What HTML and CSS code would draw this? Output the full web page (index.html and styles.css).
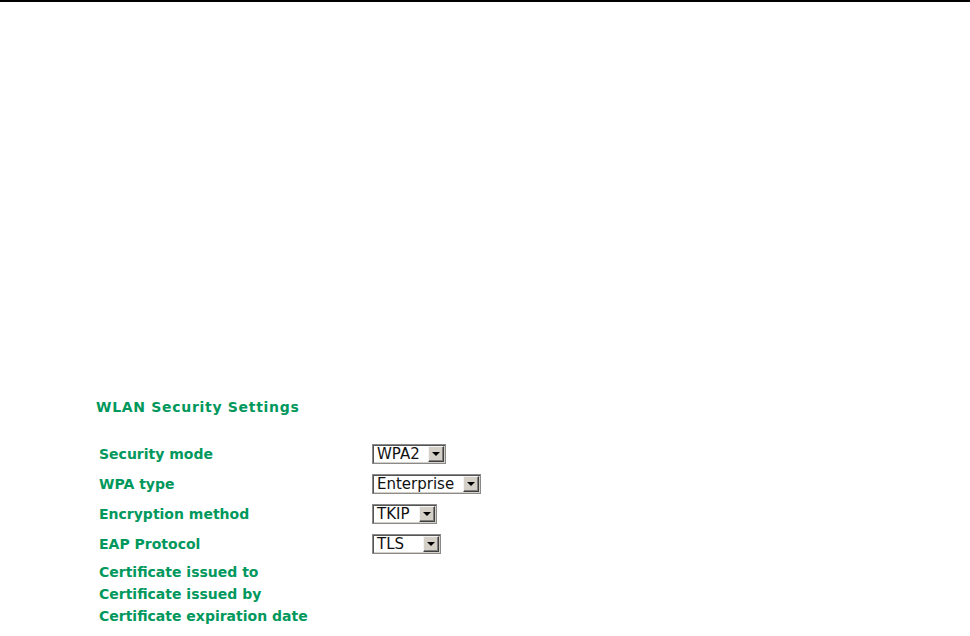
FILE: index.html
```html
<!DOCTYPE html>
<html lang="en">

<head>
    <meta charset="UTF-8">
    <meta name="viewport" content="width=device-width, initial-scale=1.0">
    <title>WLAN Security Settings</title>

    <link rel="stylesheet" href="styles.css">
</head>

<body>
    <div class="page">
        <div class="settings">
            <h2 class="settings_title">WLAN Security Settings</h2>

            <div class="settings_form">
                <div class="row">
                    <div class="label">Security mode</div>
                    <div class="field">
                        <span class="combo combo_wpa2"><span class="combo_text">WPA2</span><span class="combo_btn"></span></span>
                    </div>
                </div>
                <div class="row">
                    <div class="label">WPA type</div>
                    <div class="field">
                        <span class="combo combo_type"><span class="combo_text">Enterprise</span><span class="combo_btn"></span></span>
                    </div>
                </div>
                <div class="row">
                    <div class="label">Encryption method</div>
                    <div class="field">
                        <span class="combo combo_enc"><span class="combo_text">TKIP</span><span class="combo_btn"></span></span>
                    </div>
                </div>
                <div class="row">
                    <div class="label">EAP Protocol</div>
                    <div class="field">
                        <span class="combo combo_eap"><span class="combo_text">TLS</span><span class="combo_btn"></span></span>
                    </div>
                </div>

                <div class="row row_small row_first">
                    <div class="label">Certificate issued to</div>
                    <div class="field"></div>
                </div>
                <div class="row row_small">
                    <div class="label">Certificate issued by</div>
                    <div class="field"></div>
                </div>
                <div class="row row_small">
                    <div class="label">Certificate expiration date</div>
                    <div class="field"></div>
                </div>
            </div>
        </div>
    </div>
</body>

</html>
```

FILE: styles.css
```css
* {
    margin: 0;
    padding: 0;
    box-sizing: border-box;
}

body {
    width: 100%;
    min-height: 100vh;
    background: #fff;
    font-family: "DejaVu Sans", Verdana, sans-serif;
}

.page {
    border-top: 2px solid #000;
    min-height: 100vh;
}

.settings {
    padding: 395px 0 0 96px;
}

.settings_title {
    font-size: 14px;
    font-weight: bold;
    line-height: 20px;
    letter-spacing: 0.7px;
    color: #00985c;
    margin-bottom: 22px;
}

.settings_form {
    display: flex;
    flex-direction: column;
}

.row {
    display: flex;
    align-items: center;
    height: 30px;
}

.row_small {
    height: 22px;
}

.row_first {
    margin-top: 2px;
}

.label {
    width: 276px;
    padding-left: 3px;
    font-size: 14px;
    font-weight: bold;
    color: #00985c;
    white-space: nowrap;
}

.field {
    display: flex;
    align-items: center;
}

/* old-style dropdown */
.combo {
    display: flex;
    align-items: center;
    justify-content: space-between;
    height: 20px;
    border: 1px solid #8a8a8a;
    box-shadow: inset 1px 1px 0 #555, inset -1px -1px 0 #d4d0c8;
    background: #fff;
    padding: 2px 2px 2px 4px;
}

.combo_wpa2 {
    width: 74px;
}

.combo_type {
    width: 109px;
}

.combo_enc {
    width: 65px;
}

.combo_eap {
    width: 69px;
}

.combo_text {
    font-size: 15px;
    color: #111;
    line-height: 16px;
}

.combo_btn {
    position: relative;
    flex-shrink: 0;
    width: 16px;
    height: 16px;
    margin-right: -1px;
    background: #d4d0c8;
    border-top: 1px solid #f4f4f4;
    border-left: 1px solid #f4f4f4;
    border-right: 1px solid #404040;
    border-bottom: 1px solid #404040;
    box-shadow: inset -1px -1px 0 #808080;
}

.combo_btn::after {
    content: "";
    position: absolute;
    left: 3px;
    top: 5px;
    border-left: 4px solid transparent;
    border-right: 4px solid transparent;
    border-top: 4px solid #000;
}
```
